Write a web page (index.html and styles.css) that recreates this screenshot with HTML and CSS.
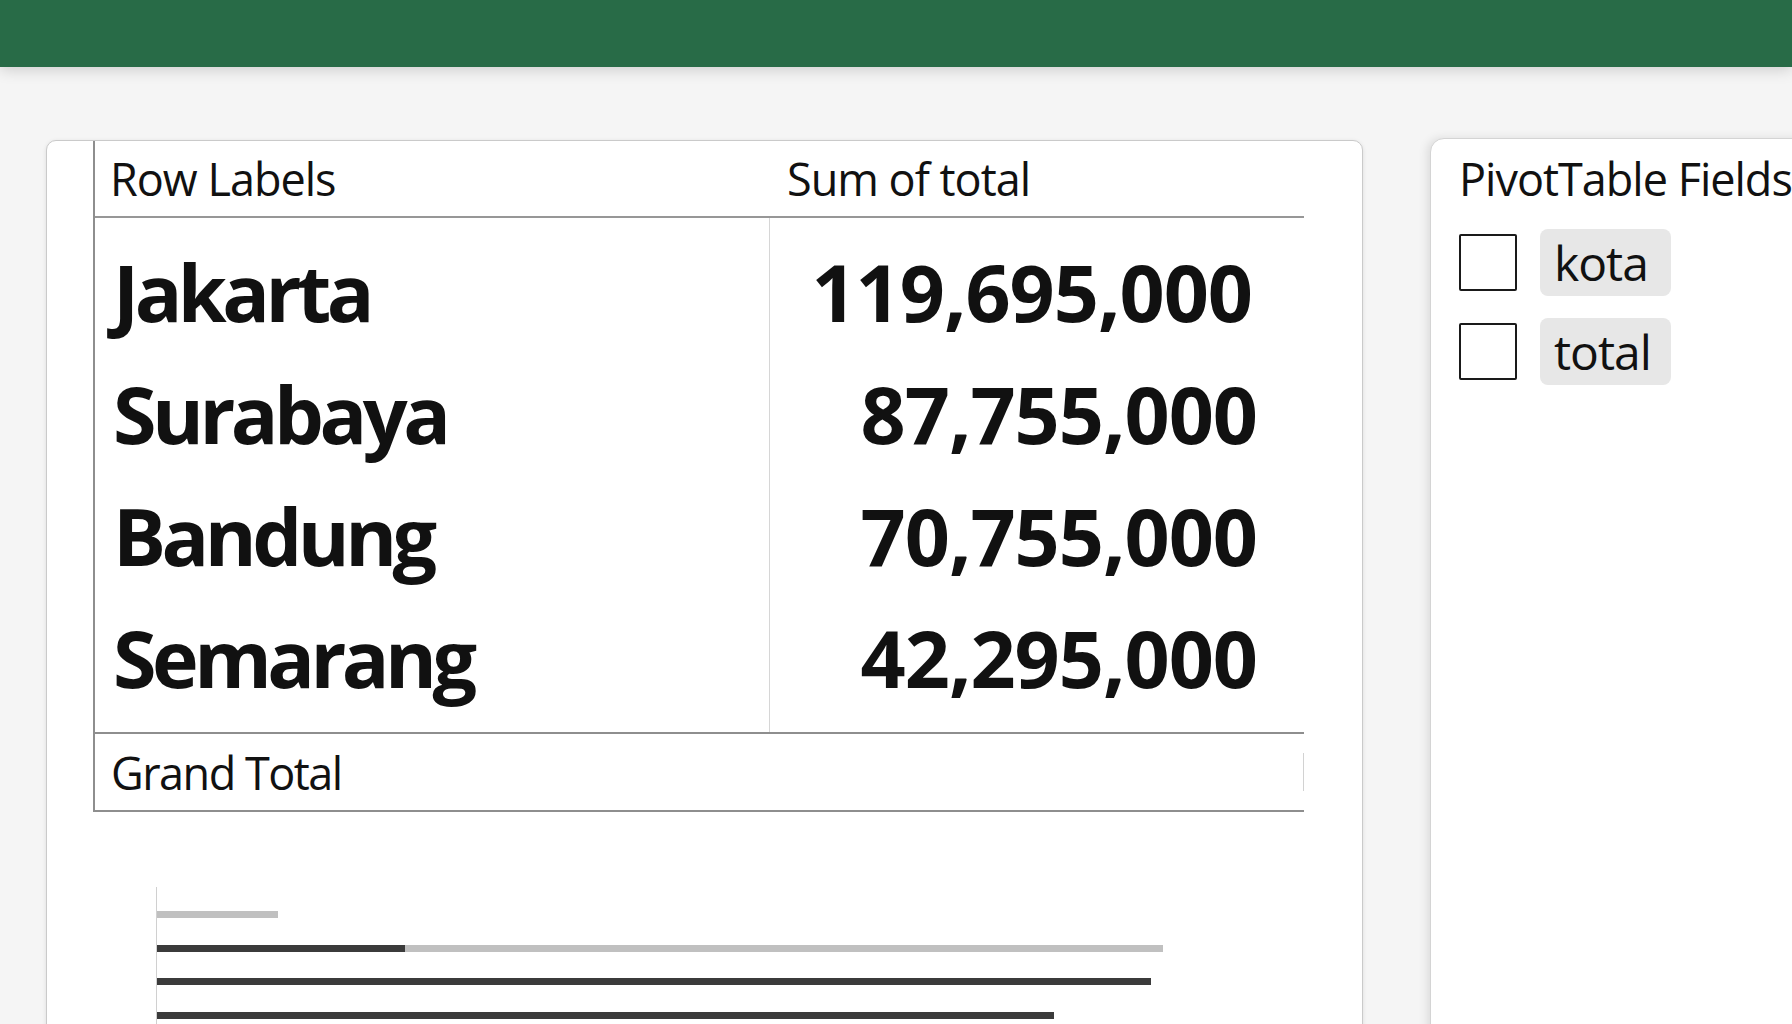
FILE: index.html
```html
<!DOCTYPE html>
<html>

<head>
    <meta http-equiv="Content-Type" content="text/html; charset=utf-8" />
    <title>PivotTable</title>
    <link rel="stylesheet" href="styles.css">
</head>

<body>
    <div class="topbar"></div>
    <div class="workspace">
        <div class="sheet">
            <div class="pivot">
                <div class="pivot_head">
                    <div class="col_label">Row Labels</div>
                    <div class="col_value">Sum of total</div>
                </div>
                <div class="pivot_body">
                    <div class="labels">
                        <div class="row">Jakarta</div>
                        <div class="row">Surabaya</div>
                        <div class="row">Bandung</div>
                        <div class="row">Semarang</div>
                    </div>
                    <div class="values">
                        <div class="row first">119,695,000</div>
                        <div class="row">87,755,000</div>
                        <div class="row">70,755,000</div>
                        <div class="row">42,295,000</div>
                    </div>
                </div>
                <div class="pivot_total">
                    <span>Grand Total</span>
                    <span class="tick"></span>
                </div>
            </div>

            <div class="chart">
                <div class="bar"><span class="light" style="width: 121px"></span></div>
                <div class="bar"><span class="dark" style="width: 248px"></span><span class="light" style="width: 758px"></span></div>
                <div class="bar"><span class="dark" style="width: 994px"></span></div>
                <div class="bar"><span class="dark" style="width: 897px"></span></div>
            </div>
        </div>

        <div class="fields">
            <div class="fields_title">PivotTable Fields</div>
            <ul class="field_list">
                <li><span class="check"></span><span class="pill">kota</span></li>
                <li><span class="check"></span><span class="pill">total</span></li>
            </ul>
        </div>
    </div>
</body>

</html>
```

FILE: styles.css
```css
    * {
        margin: 0;
        padding: 0;
        box-sizing: border-box;
    }

    html,
    body {
        height: 100%;
        overflow: hidden;
    }

    body {
        background: #F5F5F5;
        font-family: "Open Sans", "Noto Sans", sans-serif;
        color: #111;
    }

    li {
        list-style: none;
    }

    .topbar {
        height: 67px;
        background: #286B47;
        box-shadow: 0 3px 14px rgba(0, 0, 0, 0.16);
        position: relative;
        z-index: 1;
    }

    .workspace {
        display: flex;
        align-items: flex-start;
        gap: 67px;
        padding: 73px 0 0 46px;
        width: 1900px;
    }

    .sheet {
        width: 1317px;
        height: 1000px;
        flex: none;
        background: #FFFFFF;
        border: 1px solid #CACACA;
        border-radius: 10px;
        box-shadow: 0 1px 4px rgba(0, 0, 0, 0.1);
        padding-left: 46px;
    }

    .pivot {
        width: 1211px;
        border-left: 2px solid #8E8E8E;
        border-bottom: 2px solid #8E8E8E;
    }

    .pivot_head {
        display: flex;
        align-items: center;
        height: 77px;
        border-bottom: 2px solid #979797;
        font-size: 45px;
        line-height: 1;
        letter-spacing: -1px;
    }

    .col_label {
        width: 675px;
        padding-left: 15px;
    }

    .col_value {
        padding-left: 17px;
    }

    .pivot_body {
        display: flex;
    }

    .labels,
    .values {
        padding: 12px 0 14px;
        font-weight: 700;
        font-size: 79px;
        line-height: 1;
    }

    .labels {
        width: 675px;
        border-right: 1px solid #D6D6D6;
        padding-left: 18px;
        letter-spacing: -4.5px;
    }

    .values {
        flex: 1;
        text-align: right;
        padding-right: 47px;
        letter-spacing: -1px;
    }

    .values .first {
        padding-right: 5px;
    }

    .row {
        height: 122px;
        display: flex;
        align-items: center;
    }

    .values .row {
        justify-content: flex-end;
    }

    .pivot_total {
        display: flex;
        align-items: center;
        height: 78px;
        border-top: 2px solid #8E8E8E;
        padding-left: 16px;
        font-size: 45px;
        line-height: 1;
        letter-spacing: -1.5px;
    }

    .tick {
        margin-left: auto;
        width: 1px;
        height: 38px;
        background: #D2D2D2;
    }

    .chart {
        margin: 75px 0 0 63px;
        border-left: 1px solid #D0D0D0;
        padding-top: 24px;
        display: flex;
        flex-direction: column;
        gap: 26.5px;
        height: 200px;
    }

    .bar {
        display: flex;
        height: 7px;
    }

    .bar .dark {
        background: #3B3B3B;
    }

    .bar .light {
        background: #C0C0C0;
    }

    .fields {
        flex: 1;
        height: 1000px;
        margin-top: -2px;
        background: #FFFFFF;
        border: 1px solid #D4D4D4;
        border-radius: 14px;
        box-shadow: -3px 0 10px rgba(0, 0, 0, 0.1);
        padding-left: 28px;
    }

    .fields_title {
        display: flex;
        align-items: center;
        height: 78px;
        font-size: 45px;
        line-height: 1;
        letter-spacing: -1px;
        white-space: nowrap;
    }

    .field_list {
        margin-top: 12px;
        display: flex;
        flex-direction: column;
        gap: 22px;
    }

    .field_list li {
        display: flex;
        align-items: center;
        gap: 23px;
    }

    .check {
        width: 58px;
        height: 57px;
        border: 2px solid #1A1A1A;
        border-radius: 2px;
        background: #FFFFFF;
    }

    .pill {
        display: flex;
        align-items: center;
        width: 131px;
        height: 67px;
        padding-left: 14px;
        background: #E7E7E7;
        border-radius: 8px;
        font-size: 48px;
        line-height: 1;
        letter-spacing: -1px;
    }
```
